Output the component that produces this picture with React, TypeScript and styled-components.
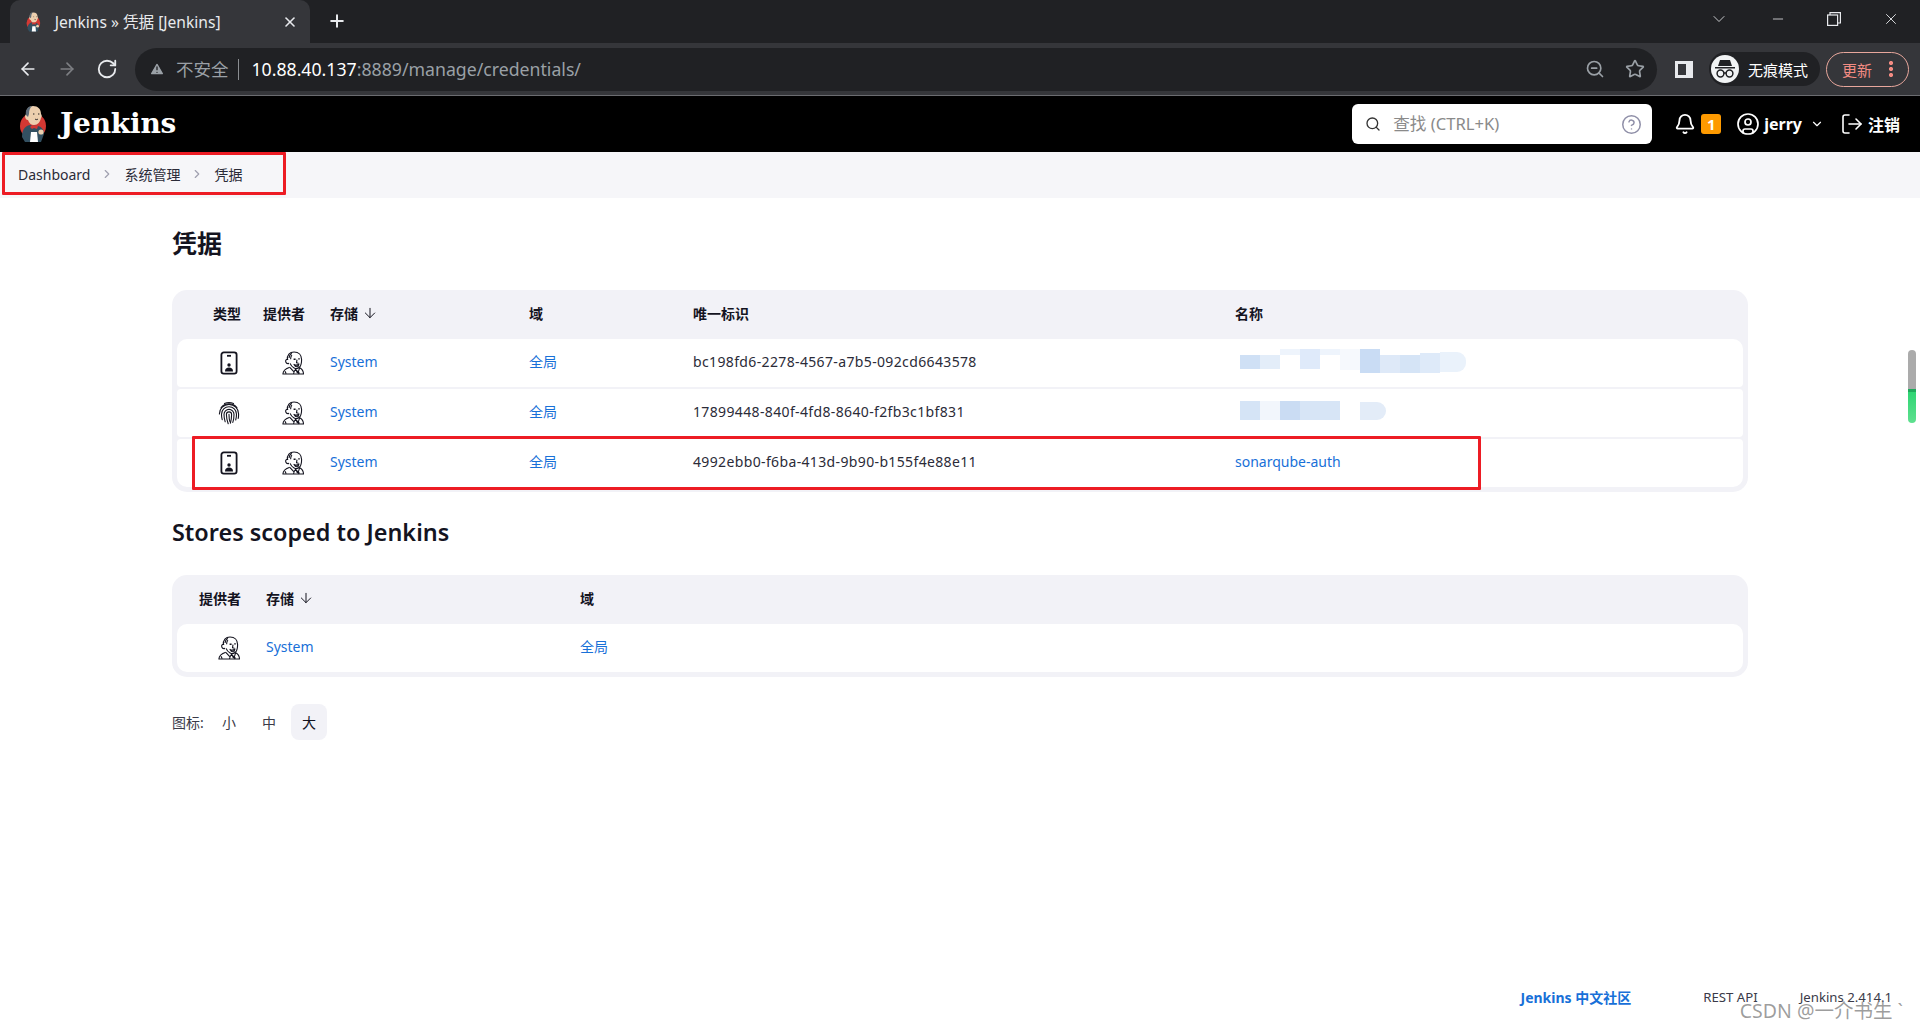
import React from "react";
import styled, { createGlobalStyle } from "styled-components";
import {
  ArrowDown,
  ArrowLeft,
  ArrowRight,
  Bell,
  ChevronDown,
  ChevronRight,
  CircleHelp,
  CircleUser,
  LogOut,
  Minus,
  Plus,
  RotateCw,
  Search,
  Star,
  TriangleAlert,
  X,
  ZoomOut,
} from "lucide-react";

const SANS = `"Noto Sans", "Noto Sans CJK SC", sans-serif`;

const GlobalStyle = createGlobalStyle`
  html, body {
    margin: 0;
    padding: 0;
    background: #fff;
    font-family: ${SANS};
    font-size: 14px;
    color: #14141f;
  }
  * { box-sizing: border-box; }
`;

const Page = styled.div`
  position: relative;
  display: flex;
  flex-direction: column;
  height: 100vh;
  overflow: hidden;
`;

/* browser chrome */
const TabStrip = styled.div`
  height: 43px;
  flex: none;
  display: flex;
  align-items: flex-end;
  padding-left: 10px;
  background: #202124;
  color: #e8eaed;
`;

const Tab = styled.div`
  width: 300px;
  height: 43px;
  display: flex;
  align-items: center;
  padding: 0 12px 0 16px;
  background: #35363a;
  border-radius: 10px 10px 0 0;
  font-size: 15.6px;
`;

const TabTitle = styled.span`
  margin-left: 14px;
  flex: 1;
  white-space: nowrap;
`;

const NewTab = styled.div`
  margin: 0 0 3px 17px;
  height: 38px;
  display: flex;
  align-items: center;
`;

const WindowControls = styled.div`
  margin-left: auto;
  height: 43px;
  display: flex;
  align-items: center;
  padding: 0 20px 6px 0;
  gap: 41px;
`;

const Toolbar = styled.div`
  height: 53px;
  flex: none;
  display: flex;
  align-items: center;
  padding: 0 11px 0 18px;
  background: #35363a;
  border-bottom: 1px solid #6b6c70;
  color: #e8eaed;
`;

const NavButtons = styled.div`
  display: flex;
  align-items: center;
  gap: 19px;
  width: 117px;
`;

const Omnibox = styled.div`
  width: 1523px;
  height: 43px;
  display: flex;
  align-items: center;
  padding: 0 12px 0 14px;
  border-radius: 22px;
  background: #202124;
  color: #9aa0a6;
`;

const Insecure = styled.span`
  margin-left: 11px;
  font-size: 17.5px;
  padding-right: 10px;
  border-right: 1px solid #8b8e92;
  line-height: 21px;
`;

const Url = styled.span`
  margin-left: 12px;
  font-size: 17.7px;
  flex: 1;
  white-space: nowrap;
  b {
    font-weight: 400;
    color: #fff;
  }
`;

const OmniIcons = styled.div`
  display: flex;
  align-items: center;
  gap: 20px;
`;

const PanelIcon = styled.div`
  margin-left: 18px;
  width: 18px;
  height: 17px;
  border: 3px solid #e8eaed;
  border-right-width: 7px;
  flex: none;
`;

const IncognitoPill = styled.div`
  margin-left: 16px;
  width: 111px;
  height: 34px;
  flex: none;
  display: flex;
  align-items: center;
  gap: 9px;
  padding-left: 2px;
  border-radius: 17px;
  background: #202124;
  font-size: 15px;
  color: #fff;
`;

const IncognitoBadge = styled.div`
  width: 28px;
  height: 28px;
  flex: none;
  border-radius: 50%;
  background: #f1f3f4;
  display: flex;
  align-items: center;
  justify-content: center;
`;

const UpdatePill = styled.div`
  margin-left: 6px;
  width: 83px;
  height: 35px;
  flex: none;
  display: flex;
  align-items: center;
  justify-content: space-between;
  padding: 0 15px 0 15px;
  border: 1px solid #e8a79c;
  border-radius: 18px;
  font-size: 15px;
  color: #f28b82;
`;

const Dots = styled.span`
  width: 4px;
  height: 16px;
  background: radial-gradient(circle at 2px 2px, #f28b82 2px, transparent 2.2px) 0 0 / 4px 6px repeat-y;
`;

/* jenkins header */
const Header = styled.header`
  height: 56px;
  flex: none;
  display: flex;
  align-items: center;
  padding: 0 20px 0 19px;
  background: #000;
  color: #fff;
`;

const Brand = styled.span`
  margin: 0 0 2px 13px;
  font-family: "DejaVu Serif", serif;
  font-size: 28px;
  font-weight: 700;
  letter-spacing: -0.2px;
`;

const SearchBox = styled.div`
  margin-left: auto;
  width: 300px;
  height: 40px;
  display: flex;
  align-items: center;
  padding: 0 10px 0 13px;
  background: #fff;
  border-radius: 6px;
  color: #8a8a8a;
  font-size: 16.6px;
`;

const SearchHint = styled.span`
  margin: 0 0 2px 12px;
  flex: 1;
`;

const HeaderActions = styled.div`
  margin-left: 22px;
  display: flex;
  align-items: center;
  font-size: 16px;
  font-weight: 700;
`;

const CountBadge = styled.span`
  margin: 0 15px 0 5px;
  width: 20px;
  height: 20px;
  display: flex;
  align-items: center;
  justify-content: center;
  border-radius: 3px;
  background: #fe9a00;
  font-size: 15px;
`;

const UserName = styled.span`
  margin: 0 8px 0 4px;
`;

const LogoutLabel = styled.span`
  margin-left: 4px;
`;

const LogoutIcon = styled(LogOut)`
  margin-left: 16px;
`;

/* breadcrumb */
const Breadcrumbs = styled.nav`
  position: relative;
  height: 46px;
  flex: none;
  display: flex;
  align-items: center;
  padding: 0 0 2px 18px;
  background: #f6f6f9;
  color: #2b2b38;
`;

const Separator = styled.span`
  width: 34px;
  display: flex;
  justify-content: center;
  color: #a0a0b0;
`;

const Annotation = styled.div<{ $left: number; $top: number; $width: number; $height: number }>`
  position: absolute;
  left: ${(p) => p.$left}px;
  top: ${(p) => p.$top}px;
  width: ${(p) => p.$width}px;
  height: ${(p) => p.$height}px;
  border: 3px solid #ed1c24;
  border-radius: 1px;
  pointer-events: none;
`;

/* content */
const Main = styled.main`
  flex: 1;
  padding: 29px 172px 0;
`;

const Title = styled.h1`
  margin: 0 0 31px;
  font-size: 25px;
  line-height: 32px;
  font-weight: 700;
`;

const Card = styled.div`
  padding: 0 5px 5px;
  border-radius: 15px;
  background: #f2f2f7;
`;

const HeadRow = styled.div<{ $cols: string }>`
  height: 49px;
  display: grid;
  grid-template-columns: ${(p) => p.$cols};
  align-items: center;
  font-weight: 600;
  color: #14141f;
`;

const BodyRow = styled.div<{ $cols: string }>`
  position: relative;
  height: 48px;
  margin-bottom: 2px;
  display: grid;
  grid-template-columns: ${(p) => p.$cols};
  align-items: center;
  background: #fff;
  border-radius: 4px;
  &:nth-child(2) {
    border-top-left-radius: 10px;
    border-top-right-radius: 10px;
  }
  &:last-child {
    margin-bottom: 0;
    border-bottom-left-radius: 10px;
    border-bottom-right-radius: 10px;
  }
`;

const HeadCell = styled.div<{ $pad?: number }>`
  padding: 0 0 4px ${(p) => p.$pad ?? 0}px;
  display: flex;
  align-items: center;
  gap: 4px;
`;

const IconCell = styled.div<{ $pad: number }>`
  padding-left: ${(p) => p.$pad}px;
  display: flex;
  align-items: center;
`;

const Link = styled.a`
  color: #1870d8;
  text-decoration: none;
`;

const CellLink = styled(Link)`
  padding-bottom: 4px;
`;

const IdText = styled.span`
  padding-bottom: 4px;
  letter-spacing: 0.36px;
  color: #2b2b38;
`;

const Mosaic = styled.div`
  margin: -4px 0 0 5px;
  height: 24px;
  display: flex;
  align-items: flex-start;
`;

const MosaicCell = styled.span<{ $color: string; $top: number; $h: number }>`
  width: 20px;
  height: ${(p) => p.$h}px;
  margin-top: ${(p) => p.$top}px;
  background: ${(p) => p.$color};
  &:last-child {
    border-radius: 0 9px 9px 0;
    width: 26px;
  }
`;

const SectionTitle = styled.h2`
  margin: 24px 0 27px;
  font-size: 23.4px;
  line-height: 32px;
  font-weight: 600;
`;

const SizeSwitch = styled.div`
  margin-top: 27px;
  display: flex;
  align-items: center;
  color: #3a3a48;
`;

const SizeLabel = styled.span`
  width: 39px;
`;

const SizeOption = styled.span<{ $active?: boolean }>`
  width: 36px;
  height: 36px;
  margin-right: 4px;
  display: flex;
  align-items: center;
  justify-content: center;
  border-radius: 8px;
  background: ${(p) => (p.$active ? "#f2f2f7" : "transparent")};
  color: ${(p) => (p.$active ? "#14141f" : "#3a3a48")};
`;

/* footer */
const Footer = styled.footer`
  position: relative;
  height: 64px;
  flex: none;
  display: flex;
  align-items: center;
  justify-content: flex-end;
  padding: 0 28px 2px 0;
  color: #3a3a48;
  font-size: 13.2px;
`;

const FooterBrand = styled(Link)`
  margin-right: 72px;
  font-size: 14px;
  font-weight: 700;
`;

const FooterItem = styled.span`
  margin-left: 42px;
  &:first-of-type {
    margin-left: 0;
  }
`;

const Watermark = styled.div`
  position: absolute;
  right: 17px;
  top: 31px;
  font-size: 19.5px;
  line-height: 27px;
  color: rgba(120, 120, 120, 0.72);
  white-space: nowrap;
`;

const ScrollPill = styled.div`
  position: absolute;
  left: 1908px;
  top: 350px;
  width: 8px;
  height: 73px;
  border-radius: 4px;
  background: linear-gradient(#ababab 0 54%, #1faa5c 54% 57%, #2ed573 57%, #5fe08f 100%);
`;

function JenkinsLogo({ size = 38 }: { size?: number }) {
  return (
    <svg width={(size * 28) / 38} height={size} viewBox="0 0 28 38" style={{ flex: "none" }}>
      <circle cx="14" cy="21" r="13" fill="#d33833" />
      <path d="M3 32c0-6 2-11 8-12l8 1c4 1 6 4 6 8l-3 8H6z" fill="#335061" />
      <path d="M7 9C7 4 10 1 14 1c5 0 8 3 8 8 1 1 1 3 0 4-1 4-3 7-7 7-3 0-5-2-6-5-2 0-3-2-3-4z" fill="#eccfae" />
      <path d="M7 10C6 5 9 1 13 1c-2 2-3 4-3 8l-1 3z" fill="#5d6b78" />
      <path d="M13 20l-2 2 2 2 2-1 3 1 1-3z" fill="#d33833" />
      <path d="M12 27h6l1 10h-8z" fill="#fff" />
      <circle cx="22" cy="27" r="2.6" fill="#eccfae" />
      <path d="M14 9h1.400M19 9h1.400M16 14c1 .8 2 .8 3 0" stroke="#231f20" strokeWidth="1" fill="none" />
    </svg>
  );
}

function IncognitoIcon() {
  return (
    <svg width="22" height="20" viewBox="0 0 22 20" fill="#202124">
      <path d="M6 1h10l2 6H4zM1 8h20v1.6H1z" />
      <circle cx="6.5" cy="14.5" r="3.4" fill="none" stroke="#202124" strokeWidth="1.5" />
      <circle cx="15.5" cy="14.5" r="3.4" fill="none" stroke="#202124" strokeWidth="1.5" />
      <path d="M9.5 14h3" stroke="#202124" strokeWidth="1.5" />
    </svg>
  );
}

function RestoreIcon() {
  return (
    <svg width="14" height="14" viewBox="0 0 14 14" fill="none" stroke="#e8eaed" strokeWidth="1.2">
      <rect x="0.6" y="3" width="10" height="10.4" />
      <path d="M3 3V.6h10.4V11H11" />
    </svg>
  );
}

function CredentialIcon() {
  return (
    <svg width="24" height="24" viewBox="0 0 24 24" fill="none" stroke="#14141f" strokeWidth="1.8">
      <rect x="4.400" y="1.400" width="15.200" height="21.200" rx="2.400" />
      <path d="M10 4.800h4" />
      <circle cx="12" cy="14" r="1.700" fill="#14141f" stroke="none" />
      <path d="M8 20.400c0-3 1.600-4 4-4s4 1 4 4z" fill="#14141f" stroke="none" />
    </svg>
  );
}

function FingerprintIcon() {
  return (
    <svg width="24" height="24" viewBox="0 0 24 24" fill="none" stroke="#14141f" strokeWidth="1.1" strokeLinecap="round">
      <path d="M7.500 2.600a10.500 10.500 0 0 1 9 0" />
      <path d="M4 6.800a10 10 0 0 1 16 0" />
      <path d="M2.400 13a9.600 9.600 0 0 1 19.200 0c0 1.600 0 3-.4 4.400" />
      <path d="M5.200 18.600c-.5-1.800-.7-3.700-.7-5.400a7.500 7.500 0 0 1 15 0c0 2.200-.2 4-.8 5.800" />
      <path d="M8.200 20.800c-.8-2.400-1.200-5-1.200-7.400a5 5 0 0 1 10 0c0 3-.3 5.400-1.200 8" />
      <path d="M11.200 22.800c-1-2.800-1.800-6-1.800-9.300a2.600 2.600 0 0 1 5.200 0c0 3.400-.4 5.800-1.200 8.600" />
      <path d="M12 13.400c0 2.800.2 5.200 1 7.400" />
    </svg>
  );
}

function ButlerIcon() {
  return (
    <svg width="24" height="24" viewBox="0 0 24 24" fill="none" stroke="#14141f" strokeWidth="1.100" strokeLinejoin="round">
      <path d="M6.400 9C5.800 4.200 8.800 1 13 1c4.800 0 7.600 3 7.600 7.600 0 3.400-.4 5.800-1.900 7.400-1.500 1.600-3.800 1.900-5.600.9-2-1.100-3.400-2.600-4-4.500" />
      <path d="M7.200 8.400c-1.900-.6-3 1-2.400 2.600.5 1.300 1.900 1.800 3.200 1.400" />
      <path d="M8 7c.2-2 1-3.600 2.800-4.800M9.600 8.200c0-1.800.4-3 1.300-4" />
      <path d="M12.600 8.200h2M17.200 7.900h1.600" strokeWidth="1.400" />
      <path d="M16 8.600l-.5 3.200 1.800.3M13 13.400c1.600 1 3.400 1 4.900-.4l-.8 2.400c-1.500.7-2.900.2-4.100-2z" />
      <path d="M8.800 16.300c-3.500 1.100-6.700 2.400-6.900 6.700h20.600c0-3-1-4.800-3.800-6.300" />
      <path d="M8.800 16.300l4.200 4.500 1.600-2.400M18.700 16.700l-1.600 5-2.500-3.300M13 20.800l-.4 2.200" />
      <path d="M15.600 20.200l2.800 2.400" strokeWidth="1.800" />
      <path d="M4 20.200l1.200 2.600" />
    </svg>
  );
}

const CRED_COLS = "72px 81px 199px 164px 542px 1fr";
const STORE_COLS = "89px 314px 1fr";

const ROWS = [
  { id: "bc198fd6-2278-4567-a7b5-092cd6643578", kind: "card" },
  { id: "17899448-840f-4fd8-8640-f2fb3c1bf831", kind: "finger" },
  { id: "4992ebb0-f6ba-413d-9b90-b155f4e88e11", kind: "card", name: "sonarqube-auth" },
];

// pixelated names, [colour, top, height]
const MOSAICS: [string, number, number][][] = [
  [
    ["#cfe0f5", 6, 14],
    ["#e3edf9", 6, 14],
    ["#eef4fc", 0, 6],
    ["#dfeafa", 0, 20],
    ["#eef4fc", 0, 6],
    ["#f6f9fd", 0, 21],
    ["#c9dcf4", 0, 24],
    ["#dee9f8", 6, 18],
    ["#d5e4f6", 6, 18],
    ["#deeaf9", 4, 20],
    ["#eaf2fb", 3, 20],
  ],
  [
    ["#d5e4f6", 2, 19],
    ["#f2f6fc", 2, 19],
    ["#cadcf3", 2, 19],
    ["#d7e5f6", 2, 19],
    ["#d7e5f6", 2, 19],
    ["transparent", 2, 19],
    ["#e3ecf8", 3, 18],
  ],
];

export default function App() {
  return (
    <Page>
      <GlobalStyle />
      <TabStrip>
        <Tab>
          <JenkinsLogo size={20} />
          <TabTitle>Jenkins » 凭据 [Jenkins]</TabTitle>
          <X size={16} strokeWidth={2.4} />
        </Tab>
        <NewTab>
          <Plus size={20} strokeWidth={2.4} />
        </NewTab>
        <WindowControls>
          <ChevronDown size={20} strokeWidth={1} />
          <Minus size={16} strokeWidth={1.2} />
          <RestoreIcon />
          <X size={18} strokeWidth={1.2} />
        </WindowControls>
      </TabStrip>
      <Toolbar>
        <NavButtons>
          <ArrowLeft size={20} />
          <ArrowRight size={20} color="#7d7f83" />
          <RotateCw size={22} />
        </NavButtons>
        <Omnibox>
          <TriangleAlert size={16} fill="#9aa0a6" stroke="#202124" />
          <Insecure>不安全</Insecure>
          <Url>
            <b>10.88.40.137</b>:8889/manage/credentials/
          </Url>
          <OmniIcons>
            <ZoomOut size={20} />
            <Star size={20} />
          </OmniIcons>
        </Omnibox>
        <PanelIcon />
        <IncognitoPill>
          <IncognitoBadge>
            <IncognitoIcon />
          </IncognitoBadge>
          无痕模式
        </IncognitoPill>
        <UpdatePill>
          更新
          <Dots />
        </UpdatePill>
      </Toolbar>

      <Header>
        <JenkinsLogo />
        <Brand>Jenkins</Brand>
        <SearchBox>
          <Search size={16} color="#333" />
          <SearchHint>查找 (CTRL+K)</SearchHint>
          <CircleHelp size={21} color="#8f8fa8" strokeWidth={1.7} />
        </SearchBox>
        <HeaderActions>
          <Bell size={22} />
          <CountBadge>1</CountBadge>
          <CircleUser size={24} strokeWidth={1.7} />
          <UserName>jerry</UserName>
          <ChevronDown size={14} />
          <LogoutIcon size={24} strokeWidth={1.6} />
          <LogoutLabel>注销</LogoutLabel>
        </HeaderActions>
      </Header>

      <Breadcrumbs>
        <span>Dashboard</span>
        <Separator>
          <ChevronRight size={14} />
        </Separator>
        <span>系统管理</span>
        <Separator>
          <ChevronRight size={14} />
        </Separator>
        <span>凭据</span>
        <Annotation $left={2} $top={0} $width={284} $height={43} />
      </Breadcrumbs>

      <Main>
        <Title>凭据</Title>
        <Card>
          <HeadRow $cols={CRED_COLS}>
            <HeadCell $pad={36}>类型</HeadCell>
            <HeadCell $pad={14}>提供者</HeadCell>
            <HeadCell>
              存储
              <ArrowDown size={16} strokeWidth={1.5} />
            </HeadCell>
            <HeadCell>域</HeadCell>
            <HeadCell>唯一标识</HeadCell>
            <HeadCell>名称</HeadCell>
          </HeadRow>
          {ROWS.map((row, i) => (
            <BodyRow $cols={CRED_COLS} key={row.id}>
              <IconCell $pad={40}>{row.kind === "card" ? <CredentialIcon /> : <FingerprintIcon />}</IconCell>
              <IconCell $pad={32}>
                <ButlerIcon />
              </IconCell>
              <CellLink>System</CellLink>
              <CellLink>全局</CellLink>
              <IdText>{row.id}</IdText>
              {row.name ? (
                <CellLink>{row.name}</CellLink>
              ) : (
                <Mosaic>
                  {MOSAICS[i].map(([color, top, h], j) => (
                    <MosaicCell key={j} $color={color} $top={top} $h={h} />
                  ))}
                </Mosaic>
              )}
              {i === 2 && <Annotation $left={15} $top={-3} $width={1289} $height={54} />}
            </BodyRow>
          ))}
        </Card>

        <SectionTitle>Stores scoped to Jenkins</SectionTitle>
        <Card>
          <HeadRow $cols={STORE_COLS}>
            <HeadCell $pad={22}>提供者</HeadCell>
            <HeadCell>
              存储
              <ArrowDown size={16} strokeWidth={1.5} />
            </HeadCell>
            <HeadCell>域</HeadCell>
          </HeadRow>
          <BodyRow $cols={STORE_COLS}>
            <IconCell $pad={40}>
              <ButlerIcon />
            </IconCell>
            <CellLink>System</CellLink>
            <CellLink>全局</CellLink>
          </BodyRow>
        </Card>

        <SizeSwitch>
          <SizeLabel>图标:</SizeLabel>
          <SizeOption>小</SizeOption>
          <SizeOption>中</SizeOption>
          <SizeOption $active>大</SizeOption>
        </SizeSwitch>
      </Main>

      <Footer>
        <FooterBrand>Jenkins 中文社区</FooterBrand>
        <FooterItem>REST API</FooterItem>
        <FooterItem>Jenkins 2.414.1</FooterItem>
        <Watermark>CSDN @一介书生 `</Watermark>
      </Footer>
      <ScrollPill />
    </Page>
  );
}
